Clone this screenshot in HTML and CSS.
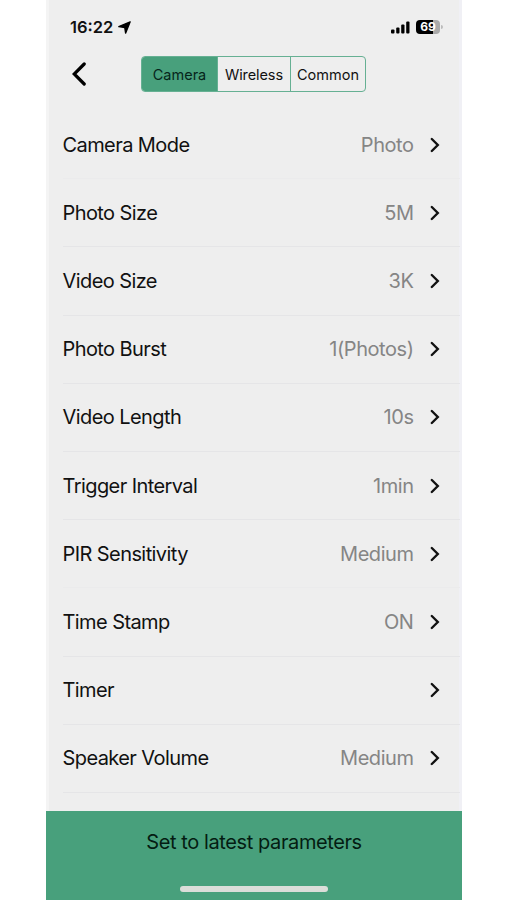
FILE: index.html
```html
<!DOCTYPE html>
<html lang="en">
<head>
    <meta charset="UTF-8">
    <meta name="viewport" content="width=device-width, initial-scale=1.0">
    <title>Camera Settings</title>
    <link rel="stylesheet" href="styles.css">
</head>
<body>
    <div class="phone">
        <div class="status-bar">
            <span class="time">16:22</span>
            <svg class="location" width="13" height="13" viewBox="0 0 13 13"><path d="M12.2 .8 7.6 12.2 6.7 6.5 .8 5.6Z" fill="#000" stroke="#000" stroke-width="1.3" stroke-linejoin="round"/></svg>
            <svg class="signal" width="19" height="13" viewBox="0 0 19 13">
                <rect x="0" y="8.5" width="3.5" height="4" rx="1"/>
                <rect x="5.2" y="6.5" width="3.3" height="6" rx="1"/>
                <rect x="10.2" y="3.5" width="3.3" height="9" rx="1"/>
                <rect x="15.2" y=".5" width="3.3" height="12" rx="1"/>
            </svg>
            <div class="battery"><span>69</span></div>
        </div>

        <div class="header">
            <svg class="back" width="14" height="24" viewBox="0 0 14 24"><path d="M12.2 2 2.2 12 12.2 22" fill="none" stroke="#000" stroke-width="3.2" stroke-linecap="round"/></svg>
            <div class="tabs">
                <div class="tab tab-camera active">Camera</div>
                <div class="tab tab-wireless">Wireless</div>
                <div class="tab tab-common">Common</div>
            </div>
        </div>

        <div class="settings">
            <div class="row faint"><span class="label">Camera Mode</span><span class="value">Photo</span><svg class="arrow" viewBox="0 0 10 16"><path d="M1.8 2 7.8 8 1.8 14"/></svg></div>
            <div class="row"><span class="label">Photo Size</span><span class="value">5M</span><svg class="arrow" viewBox="0 0 10 16"><path d="M1.8 2 7.8 8 1.8 14"/></svg></div>
            <div class="row"><span class="label">Video Size</span><span class="value">3K</span><svg class="arrow" viewBox="0 0 10 16"><path d="M1.8 2 7.8 8 1.8 14"/></svg></div>
            <div class="row"><span class="label">Photo Burst</span><span class="value">1(Photos)</span><svg class="arrow" viewBox="0 0 10 16"><path d="M1.8 2 7.8 8 1.8 14"/></svg></div>
            <div class="row"><span class="label">Video Length</span><span class="value">10s</span><svg class="arrow" viewBox="0 0 10 16"><path d="M1.8 2 7.8 8 1.8 14"/></svg></div>
            <div class="row"><span class="label">Trigger Interval</span><span class="value">1min</span><svg class="arrow" viewBox="0 0 10 16"><path d="M1.8 2 7.8 8 1.8 14"/></svg></div>
            <div class="row faint"><span class="label">PIR Sensitivity</span><span class="value">Medium</span><svg class="arrow" viewBox="0 0 10 16"><path d="M1.8 2 7.8 8 1.8 14"/></svg></div>
            <div class="row"><span class="label">Time Stamp</span><span class="value">ON</span><svg class="arrow" viewBox="0 0 10 16"><path d="M1.8 2 7.8 8 1.8 14"/></svg></div>
            <div class="row"><span class="label">Timer</span><span class="value"></span><svg class="arrow" viewBox="0 0 10 16"><path d="M1.8 2 7.8 8 1.8 14"/></svg></div>
            <div class="row"><span class="label">Speaker Volume</span><span class="value">Medium</span><svg class="arrow" viewBox="0 0 10 16"><path d="M1.8 2 7.8 8 1.8 14"/></svg></div>
        </div>

        <div class="footer">
            <div class="submit">Set to latest parameters</div>
            <div class="home-bar"></div>
        </div>
    </div>
</body>
</html>
```
FILE: styles.css
```css
body {
    margin: 0;
    background: #fff;
    font-family: Inter, "Liberation Sans", sans-serif;
    color: #111;
}
.phone {
    box-sizing: border-box;
    display: flex;
    flex-direction: column;
    width: 416px;
    height: 900px;
    margin-left: 46px;
    background: linear-gradient(to right, #f4f4f4 3px, #eee 3px, #eee 413px, #f0f0f5 413px);
    overflow: hidden;
}
.status-bar {
    display: flex;
    align-items: center;
    height: 54px;
    padding: 0 20px 0 24px;
    box-sizing: border-box;
}
.time {
    width: 45px;
    font-size: 16.5px;
    font-weight: 600;
    white-space: nowrap;
}
.location {
    margin-left: 3px;
}
.signal {
    margin-left: auto;
    margin-right: 6px;
}
.battery {
    position: relative;
    width: 24px;
    height: 14px;
    margin-right: 2px;
    border-radius: 4px;
    background: linear-gradient(to right, #000 17px, #aaa 17px);
    color: #fff;
    font-size: 12px;
    font-weight: 700;
    line-height: 14px;
    text-align: center;
}
.battery::after {
    content: "";
    position: absolute;
    left: 25px;
    top: 5px;
    width: 2px;
    height: 4px;
    border-radius: 0 2px 2px 0;
    background: #bbb;
}
.header {
    display: flex;
    align-items: center;
    height: 40px;
    padding-left: 26px;
}
.tabs {
    display: flex;
    box-sizing: border-box;
    width: 225px;
    height: 36px;
    margin-left: 55px;
    border: 1.5px solid #66b093;
    border-radius: 4px;
    overflow: hidden;
    font-size: 14.5px;
    line-height: 35px;
    text-align: center;
    white-space: nowrap;
}
.tab {
    box-sizing: border-box;
    border-right: 1px solid #66b093;
}
.tab-camera {
    width: 76px;
}
.tab-wireless {
    width: 73px;
    letter-spacing: -0.1px;
}
.tab-common {
    flex: 1;
    border-right: 0;
}
.tab.active {
    background: #48a07c;
    color: #06251a;
}
.settings {
    flex: 1;
    padding: 17px 2px 0 16.5px;
}
.row {
    display: flex;
    align-items: center;
    box-sizing: border-box;
    height: 68.2px;
    border-bottom: 1px solid #e5e5e7;
    font-size: 20px;
}
.row.faint {
    border-bottom-color: #ebebec;
}
.label {
    flex: 1;
    letter-spacing: -0.58px;
}
.value {
    color: #858585;
    letter-spacing: -0.45px;
}
.arrow {
    width: 10px;
    height: 16px;
    margin: 0 20px 0 16.5px;
    fill: none;
    stroke: #111;
    stroke-width: 2.4;
    stroke-linecap: round;
}
.footer {
    display: flex;
    flex-direction: column;
    align-items: center;
    justify-content: space-between;
    box-sizing: border-box;
    height: 89.5px;
    padding: 16px 0 8px;
    background: #48a07c;
}
.submit {
    color: #041c12;
    font-size: 20px;
    line-height: 30px;
    letter-spacing: -0.4px;
}
.home-bar {
    width: 148px;
    height: 6px;
    border-radius: 3px;
    background: #dbded9;
}
```
